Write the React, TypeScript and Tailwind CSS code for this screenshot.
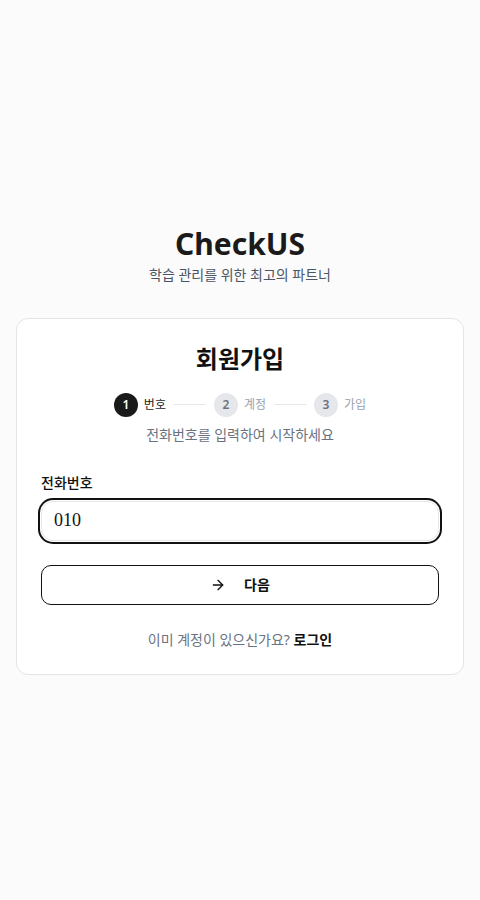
import { ArrowRight } from 'lucide-react';

const steps = [
  { n: 1, label: '번호', active: true },
  { n: 2, label: '계정', active: false },
  { n: 3, label: '가입', active: false },
];

export default function App() {
  return (
    <div
      className="min-h-screen bg-[#fbfbfb] flex items-center justify-center px-4"
      style={{ fontFamily: '"Noto Sans", "Noto Sans CJK KR", sans-serif' }}
    >
      <div className="w-full">
        {/* Header */}
        <div className="text-center">
          <h1 className="text-[30px] leading-9 font-bold text-[#1a1a1a]">CheckUS</h1>
          <p className="mt-[3px] text-sm text-gray-600">학습 관리를 위한 최고의 파트너</p>
        </div>

        {/* Card */}
        <div className="mt-[33px] bg-white border border-[#e5e5e5] rounded-xl p-6">
          <h2 className="text-center text-2xl leading-8 font-bold text-[#111]">회원가입</h2>

          {/* Steps */}
          <div className="mt-[18px] flex items-center justify-center">
            {steps.map((s, i) => (
              <div key={s.n} className="flex items-center">
                <div
                  className={`w-6 h-6 rounded-full flex items-center justify-center text-xs font-semibold ${
                    s.active ? 'bg-[#1a1a1a] text-white' : 'bg-gray-200 text-gray-500'
                  }`}
                >
                  {s.n}
                </div>
                <span className={`ml-1.5 text-xs ${s.active ? 'text-[#1a1a1a]' : 'text-gray-400'}`}>
                  {s.label}
                </span>
                {i < steps.length - 1 && <div className="mx-2 w-8 h-px bg-gray-200" />}
              </div>
            ))}
          </div>

          <p className="mt-2 text-center text-sm text-gray-500">전화번호를 입력하여 시작하세요</p>

          {/* Form */}
          <label className="block mt-7 text-sm font-medium text-[#111]">전화번호</label>
          <input
            type="text"
            defaultValue="010"
            className="mt-2 w-full h-10 rounded-xl border border-gray-200 bg-white px-3 text-lg text-[#111] outline-none ring-2 ring-[#111] ring-offset-1"
            style={{ fontFamily: '"Liberation Serif", serif' }}
          />

          <button className="mt-6 w-full h-10 rounded-[10px] border border-[#111] bg-white flex items-center justify-center gap-[18px] text-sm font-bold text-[#111]">
            <ArrowRight size={16} strokeWidth={2} />
            <span>다음</span>
          </button>

          <p className="mt-[25px] text-center text-sm text-gray-500">
            이미 계정이 있으신가요? <span className="font-bold text-[#111]">로그인</span>
          </p>
        </div>
      </div>
    </div>
  );
}
